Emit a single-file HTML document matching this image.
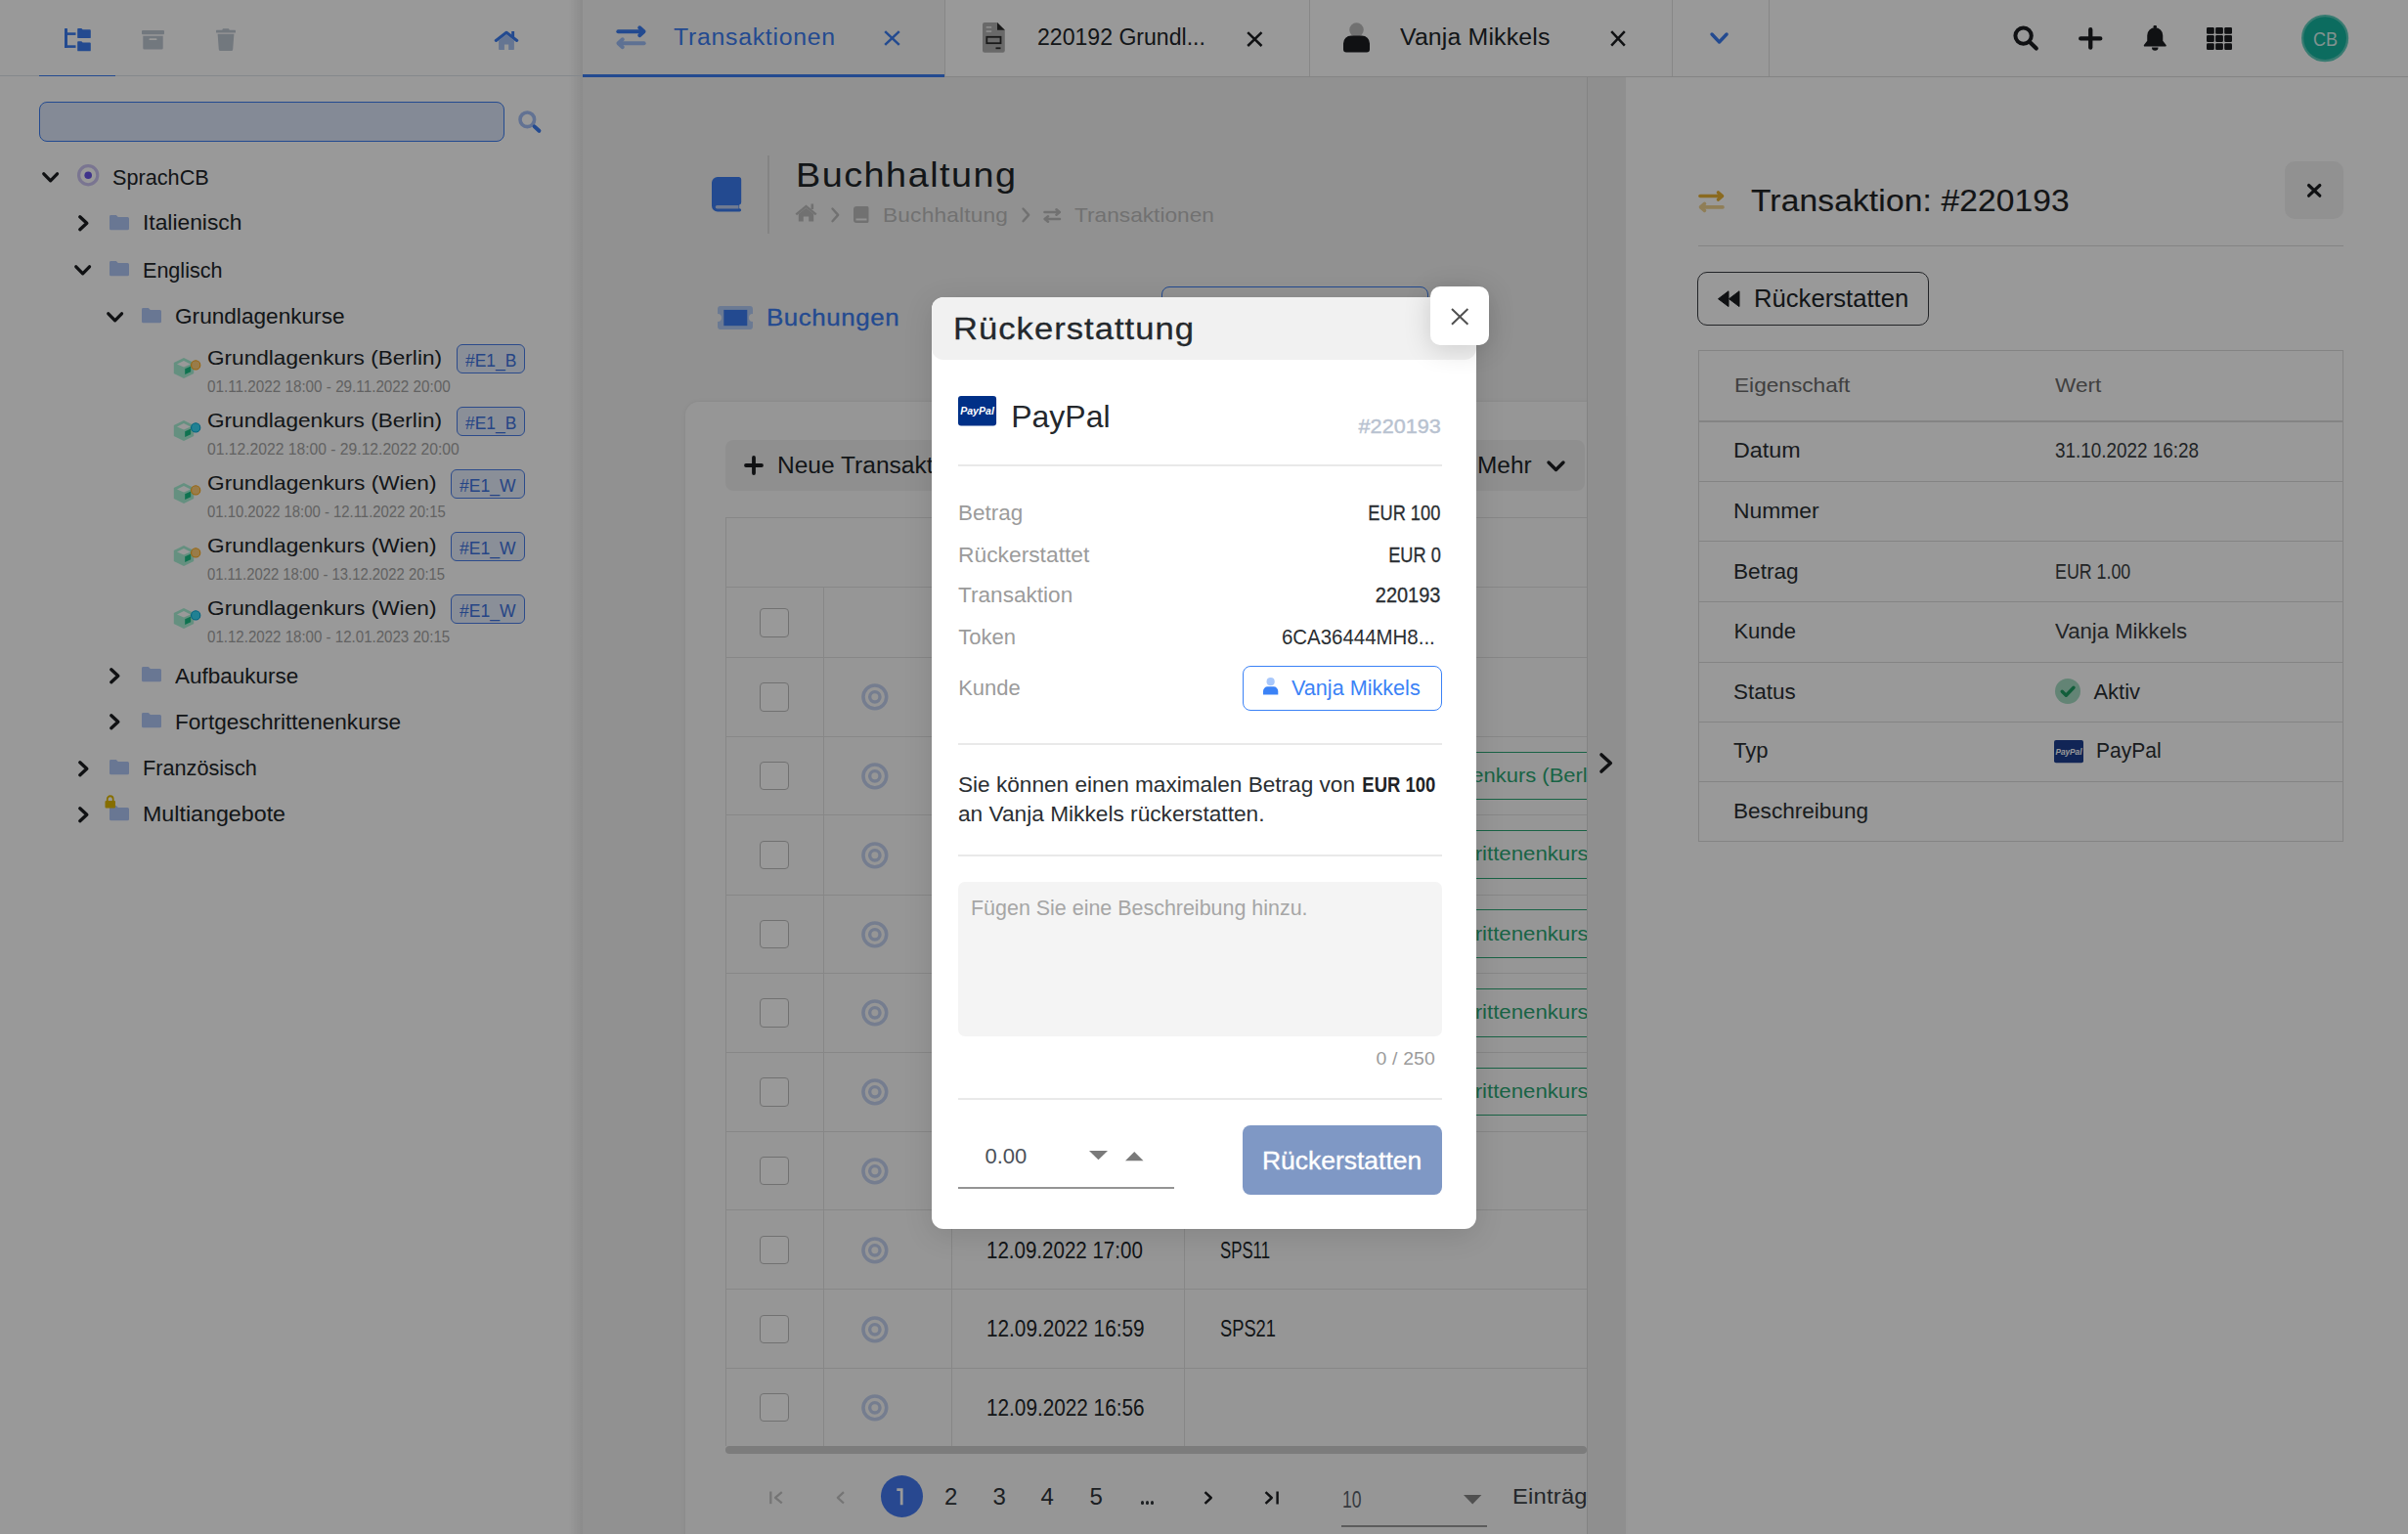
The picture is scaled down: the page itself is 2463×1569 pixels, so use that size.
<!DOCTYPE html>
<html><head><meta charset="utf-8"><title>Rückerstattung</title>
<style>
html,body{margin:0;padding:0;}
body{width:2463px;height:1569px;position:relative;overflow:hidden;background:#fff;font-family:"Liberation Sans",sans-serif;}
.a{position:absolute;box-sizing:border-box;}
.t{position:absolute;white-space:nowrap;line-height:1;font-family:"Liberation Sans",sans-serif;}
svg.a{overflow:visible;}
</style></head><body>
<div class="a" style="left:0.0px;top:0.0px;width:596.0px;height:1569.0px;background:#ffffff;"></div>
<div class="a" style="left:596.0px;top:79.0px;width:1027.0px;height:1490.0px;background:#f2f2f2;"></div>
<div class="a" style="left:1623.0px;top:79.0px;width:40.0px;height:1490.0px;background:#efefef;"></div>
<div class="a" style="left:1622.5px;top:79.0px;width:1.5px;height:1490.0px;background:#dadada;"></div>
<div class="a" style="left:1663.0px;top:79.0px;width:800.0px;height:1490.0px;background:#ffffff;"></div>
<div class="a" style="left:582.0px;top:0.0px;width:14.0px;height:1569.0px;background:linear-gradient(90deg,rgba(0,0,0,0) 0%,rgba(0,0,0,0.09) 100%);"></div>
<div class="a" style="left:596.0px;top:0.0px;width:1867.0px;height:78.0px;background:#ffffff;"></div>
<div class="a" style="left:596.0px;top:0.0px;width:370.0px;height:78.0px;background:#f7f7f7;"></div>
<div class="a" style="left:596.0px;top:78.0px;width:1867.0px;height:1.0px;background:#dcdcdc;"></div>
<div class="a" style="left:966.0px;top:0.0px;width:1.0px;height:78.0px;background:#e2e2e2;"></div>
<div class="a" style="left:1338.5px;top:0.0px;width:1.0px;height:78.0px;background:#e2e2e2;"></div>
<div class="a" style="left:1709.5px;top:0.0px;width:1.0px;height:78.0px;background:#e2e2e2;"></div>
<div class="a" style="left:1809.0px;top:0.0px;width:1.0px;height:78.0px;background:#e2e2e2;"></div>
<div class="a" style="left:596.0px;top:76.0px;width:370.0px;height:3.0px;background:#3b7cf0;"></div>
<div class="a" style="left:0.0px;top:77.0px;width:596.0px;height:1.0px;background:#dde3ea;"></div>
<div class="a" style="left:40.0px;top:76.8px;width:78.0px;height:1.5px;background:#3b7cf0;"></div>
<svg class="a" style="left:66.0px;top:29.0px;" width="26.5" height="23.5" viewBox="0 0 26.5 23.5"><g fill="#3b7cf0">
<rect x="0" y="0" width="3" height="20" rx="0.5"/>
<rect x="0" y="4.3" width="11.5" height="2.6"/>
<rect x="0" y="17.3" width="11.5" height="2.6"/>
<path d="M13.2 0.8a0.8 0.8 0 0 1 0.8-0.8h3.3l1.3 1.3h7.3a0.9 0.9 0 0 1 0.9 0.9v7a0.9 0.9 0 0 1-0.9 0.9h-11.8a0.9 0.9 0 0 1-0.9-0.9z"/>
<path d="M13.2 14a0.8 0.8 0 0 1 0.8-0.8h3.3l1.3 1.3h7.3a0.9 0.9 0 0 1 0.9 0.9v7a0.9 0.9 0 0 1-0.9 0.9h-11.8a0.9 0.9 0 0 1-0.9-0.9z"/>
</g></svg>
<svg class="a" style="left:145.0px;top:30.5px;" width="23.0" height="20.0" viewBox="0 0 23 20"><g fill="#bfc8d3"><rect x="0" y="0" width="23" height="4.2" rx="1"/>
<path d="M1.3 5.7h20.4v12.6a1.3 1.3 0 0 1-1.3 1.3h-17.8a1.3 1.3 0 0 1-1.3-1.3z"/>
<rect x="7.5" y="8.3" width="8" height="1.8" rx="0.9" fill="#ffffff"/></g></svg>
<svg class="a" style="left:221.0px;top:29.0px;" width="20.0" height="23.0" viewBox="0 0 20 23"><g fill="#bfc8d3"><rect x="0" y="1.8" width="20" height="2.6" rx="0.5"/>
<path d="M7 0.2h6l0.8 1.8h-7.6z"/>
<path d="M1.6 5.7h16.8l-1.2 15.8a1.6 1.6 0 0 1-1.6 1.5h-11.2a1.6 1.6 0 0 1-1.6-1.5z"/></g></svg>
<svg class="a" style="left:505.0px;top:30.0px;" width="26.0" height="22.0" viewBox="0 0 26 22"><path d="M5.1 11.4L13 5.6L20.9 11.4V20.2a0.8 0.8 0 0 1-0.8 0.8H15.2V15.5H10.9V21H5.9a0.8 0.8 0 0 1-0.8-0.8z" fill="#a9c3f3"/>
<rect x="18.2" y="2" width="2.9" height="6.8" fill="#3b7cf0"/>
<polyline points="2.3,11.4 13,3.3 23.7,11.4" fill="none" stroke="#3b7cf0" stroke-width="3.1" stroke-linecap="round" stroke-linejoin="round"/></svg>
<div class="a" style="left:40.0px;top:104.0px;width:476.0px;height:40.8px;background:#dde6fb;border:1.6px solid #3b7cf0;border-radius:8px;"></div>
<svg class="a" style="left:530.0px;top:113.0px;" width="23.5" height="23.5" viewBox="0 0 23.5 23.5"><circle cx="9.3" cy="9.3" r="7.3" fill="none" stroke="#a3bff5" stroke-width="3.6"/>
<path d="M16.6 16.4 L21.4 20.8" stroke="#3b7cf0" stroke-width="4" stroke-linecap="round"/></svg>
<svg class="a" style="left:43.4px;top:176.1px;" width="17.3" height="10.8" viewBox="0 0 17.3 10.8"><polyline points="1.8,1.8 8.65,8.8 15.5,1.8" fill="none" stroke="#1b1d20" stroke-width="3.3" stroke-linecap="round" stroke-linejoin="round"/></svg>
<svg class="a" style="left:79.3px;top:168.3px;" width="22.4" height="22.4" viewBox="0 0 22.4 22.4"><circle cx="11.2" cy="11.2" r="9.6" fill="none" stroke="#cbc3f2" stroke-width="3.2"/><circle cx="11.2" cy="11.2" r="3.8" fill="#6a55e8"/></svg>
<div class="t" style="left:115.4px;top:170.5px;font-size:22px;color:#212529;transform:scaleX(0.9848);transform-origin:0.00px 0;">SprachCB</div>
<svg class="a" style="left:79.6px;top:220.2px;" width="10.8" height="16.5" viewBox="0 0 10.8 16.5"><polyline points="1.8,1.8 8.8,8.25 1.8,14.7" fill="none" stroke="#1b1d20" stroke-width="3.4" stroke-linecap="round" stroke-linejoin="round"/></svg>
<svg class="a" style="left:112.0px;top:219.5px;" width="20.0" height="15.2" viewBox="0 0 20 15.2"><path d="M0 1.5a1.5 1.5 0 0 1 1.5-1.5h5.3l2 2h9.7a1.5 1.5 0 0 1 1.5 1.5v10.2a1.5 1.5 0 0 1-1.5 1.5h-17a1.5 1.5 0 0 1-1.5-1.5z" fill="#b0c6f5"/></svg>
<div class="t" style="left:146.0px;top:217.4px;font-size:22px;color:#212529;transform:scaleX(1.0359);transform-origin:0.00px 0;">Italienisch</div>
<svg class="a" style="left:76.3px;top:271.4px;" width="17.3" height="10.8" viewBox="0 0 17.3 10.8"><polyline points="1.8,1.8 8.65,8.8 15.5,1.8" fill="none" stroke="#1b1d20" stroke-width="3.3" stroke-linecap="round" stroke-linejoin="round"/></svg>
<svg class="a" style="left:112.0px;top:267.0px;" width="20.0" height="15.2" viewBox="0 0 20 15.2"><path d="M0 1.5a1.5 1.5 0 0 1 1.5-1.5h5.3l2 2h9.7a1.5 1.5 0 0 1 1.5 1.5v10.2a1.5 1.5 0 0 1-1.5 1.5h-17a1.5 1.5 0 0 1-1.5-1.5z" fill="#b0c6f5"/></svg>
<div class="t" style="left:146.0px;top:265.6px;font-size:22px;color:#212529;transform:scaleX(0.9800);transform-origin:0.00px 0;">Englisch</div>
<svg class="a" style="left:109.3px;top:318.8px;" width="17.3" height="10.8" viewBox="0 0 17.3 10.8"><polyline points="1.8,1.8 8.65,8.8 15.5,1.8" fill="none" stroke="#1b1d20" stroke-width="3.3" stroke-linecap="round" stroke-linejoin="round"/></svg>
<svg class="a" style="left:145.0px;top:314.5px;" width="20.0" height="15.2" viewBox="0 0 20 15.2"><path d="M0 1.5a1.5 1.5 0 0 1 1.5-1.5h5.3l2 2h9.7a1.5 1.5 0 0 1 1.5 1.5v10.2a1.5 1.5 0 0 1-1.5 1.5h-17a1.5 1.5 0 0 1-1.5-1.5z" fill="#b0c6f5"/></svg>
<div class="t" style="left:179.0px;top:312.6px;font-size:22px;color:#212529;transform:scaleX(1.0282);transform-origin:0.00px 0;">Grundlagenkurse</div>
<svg class="a" style="left:177.8px;top:366.4px;" width="27.0" height="22.0" viewBox="0 0 27 22"><polygon points="10,0 20.2,4.9 20.2,16.1 10,21 -0.2,16.1 -0.2,4.9" fill="#a9f0d6"/>
<polygon points="10,3.1 16.9,6.4 10,9.4 3,6.4" fill="#ffffff"/>
<polygon points="11.2,11.3 17.2,8.5 17.2,14.3 11.2,17.1" fill="#19bf85"/>
<circle cx="22.2" cy="7.4" r="4.6" fill="#ffcf7a" stroke="#ffa915" stroke-width="1.1"/></svg>
<div class="t" style="left:212.0px;top:355.2px;font-size:21px;color:#212529;transform:scaleX(1.0766);transform-origin:0.00px 0;">Grundlagenkurs (Berlin)</div>
<div class="t" style="left:212.0px;top:388.0px;font-size:16px;color:#a3a3a3;transform:scaleX(0.9530);transform-origin:0.00px 0;">01.11.2022 18:00 - 29.11.2022 20:00</div>
<div class="a" style="left:467.0px;top:352.0px;width:69.8px;height:29.5px;background:#e6eefd;border:1.6px solid #4a7ee8;border-radius:6px;"></div>
<div class="t" style="left:475.6px;top:359.9px;font-size:18px;color:#3f73e0;transform:scaleX(0.9688);transform-origin:0.00px 0;">#E1_B</div>
<svg class="a" style="left:177.8px;top:430.4px;" width="27.0" height="22.0" viewBox="0 0 27 22"><polygon points="10,0 20.2,4.9 20.2,16.1 10,21 -0.2,16.1 -0.2,4.9" fill="#a9f0d6"/>
<polygon points="10,3.1 16.9,6.4 10,9.4 3,6.4" fill="#ffffff"/>
<polygon points="11.2,11.3 17.2,8.5 17.2,14.3 11.2,17.1" fill="#19bf85"/>
<circle cx="22.2" cy="7.4" r="4.6" fill="#38d8f6" stroke="#00a6d4" stroke-width="1.1"/></svg>
<div class="t" style="left:212.0px;top:419.2px;font-size:21px;color:#212529;transform:scaleX(1.0766);transform-origin:0.00px 0;">Grundlagenkurs (Berlin)</div>
<div class="t" style="left:212.0px;top:452.0px;font-size:16px;color:#a3a3a3;transform:scaleX(0.9789);transform-origin:0.00px 0;">01.12.2022 18:00 - 29.12.2022 20:00</div>
<div class="a" style="left:467.0px;top:416.0px;width:69.8px;height:29.5px;background:#e6eefd;border:1.6px solid #4a7ee8;border-radius:6px;"></div>
<div class="t" style="left:475.6px;top:423.9px;font-size:18px;color:#3f73e0;transform:scaleX(0.9688);transform-origin:0.00px 0;">#E1_B</div>
<svg class="a" style="left:177.8px;top:494.4px;" width="27.0" height="22.0" viewBox="0 0 27 22"><polygon points="10,0 20.2,4.9 20.2,16.1 10,21 -0.2,16.1 -0.2,4.9" fill="#a9f0d6"/>
<polygon points="10,3.1 16.9,6.4 10,9.4 3,6.4" fill="#ffffff"/>
<polygon points="11.2,11.3 17.2,8.5 17.2,14.3 11.2,17.1" fill="#19bf85"/>
<circle cx="22.2" cy="7.4" r="4.6" fill="#ffcf7a" stroke="#ffa915" stroke-width="1.1"/></svg>
<div class="t" style="left:212.0px;top:483.2px;font-size:21px;color:#212529;transform:scaleX(1.0799);transform-origin:0.00px 0;">Grundlagenkurs (Wien)</div>
<div class="t" style="left:212.0px;top:516.0px;font-size:16px;color:#a3a3a3;transform:scaleX(0.9296);transform-origin:0.00px 0;">01.10.2022 18:00 - 12.11.2022 20:15</div>
<div class="a" style="left:461.0px;top:480.0px;width:75.8px;height:29.5px;background:#e6eefd;border:1.6px solid #4a7ee8;border-radius:6px;"></div>
<div class="t" style="left:470.0px;top:487.9px;font-size:18px;color:#3f73e0;transform:scaleX(0.9739);transform-origin:0.00px 0;">#E1_W</div>
<svg class="a" style="left:177.8px;top:558.4px;" width="27.0" height="22.0" viewBox="0 0 27 22"><polygon points="10,0 20.2,4.9 20.2,16.1 10,21 -0.2,16.1 -0.2,4.9" fill="#a9f0d6"/>
<polygon points="10,3.1 16.9,6.4 10,9.4 3,6.4" fill="#ffffff"/>
<polygon points="11.2,11.3 17.2,8.5 17.2,14.3 11.2,17.1" fill="#19bf85"/>
<circle cx="22.2" cy="7.4" r="4.6" fill="#ffcf7a" stroke="#ffa915" stroke-width="1.1"/></svg>
<div class="t" style="left:212.0px;top:547.2px;font-size:21px;color:#212529;transform:scaleX(1.0799);transform-origin:0.00px 0;">Grundlagenkurs (Wien)</div>
<div class="t" style="left:212.0px;top:580.0px;font-size:16px;color:#a3a3a3;transform:scaleX(0.9269);transform-origin:0.00px 0;">01.11.2022 18:00 - 13.12.2022 20:15</div>
<div class="a" style="left:461.0px;top:544.0px;width:75.8px;height:29.5px;background:#e6eefd;border:1.6px solid #4a7ee8;border-radius:6px;"></div>
<div class="t" style="left:470.0px;top:551.9px;font-size:18px;color:#3f73e0;transform:scaleX(0.9739);transform-origin:0.00px 0;">#E1_W</div>
<svg class="a" style="left:177.8px;top:622.4px;" width="27.0" height="22.0" viewBox="0 0 27 22"><polygon points="10,0 20.2,4.9 20.2,16.1 10,21 -0.2,16.1 -0.2,4.9" fill="#a9f0d6"/>
<polygon points="10,3.1 16.9,6.4 10,9.4 3,6.4" fill="#ffffff"/>
<polygon points="11.2,11.3 17.2,8.5 17.2,14.3 11.2,17.1" fill="#19bf85"/>
<circle cx="22.2" cy="7.4" r="4.6" fill="#38d8f6" stroke="#00a6d4" stroke-width="1.1"/></svg>
<div class="t" style="left:212.0px;top:611.2px;font-size:21px;color:#212529;transform:scaleX(1.0799);transform-origin:0.00px 0;">Grundlagenkurs (Wien)</div>
<div class="t" style="left:212.0px;top:644.0px;font-size:16px;color:#a3a3a3;transform:scaleX(0.9424);transform-origin:0.00px 0;">01.12.2022 18:00 - 12.01.2023 20:15</div>
<div class="a" style="left:461.0px;top:608.0px;width:75.8px;height:29.5px;background:#e6eefd;border:1.6px solid #4a7ee8;border-radius:6px;"></div>
<div class="t" style="left:470.0px;top:615.9px;font-size:18px;color:#3f73e0;transform:scaleX(0.9739);transform-origin:0.00px 0;">#E1_W</div>
<svg class="a" style="left:112.0px;top:683.0px;" width="10.8" height="16.5" viewBox="0 0 10.8 16.5"><polyline points="1.8,1.8 8.8,8.25 1.8,14.7" fill="none" stroke="#1b1d20" stroke-width="3.4" stroke-linecap="round" stroke-linejoin="round"/></svg>
<svg class="a" style="left:145.0px;top:681.8px;" width="20.0" height="15.2" viewBox="0 0 20 15.2"><path d="M0 1.5a1.5 1.5 0 0 1 1.5-1.5h5.3l2 2h9.7a1.5 1.5 0 0 1 1.5 1.5v10.2a1.5 1.5 0 0 1-1.5 1.5h-17a1.5 1.5 0 0 1-1.5-1.5z" fill="#b0c6f5"/></svg>
<div class="t" style="left:179.3px;top:680.5px;font-size:22px;color:#212529;transform:scaleX(1.0216);transform-origin:0.00px 0;">Aufbaukurse</div>
<svg class="a" style="left:112.0px;top:730.0px;" width="10.8" height="16.5" viewBox="0 0 10.8 16.5"><polyline points="1.8,1.8 8.8,8.25 1.8,14.7" fill="none" stroke="#1b1d20" stroke-width="3.4" stroke-linecap="round" stroke-linejoin="round"/></svg>
<svg class="a" style="left:145.0px;top:728.8px;" width="20.0" height="15.2" viewBox="0 0 20 15.2"><path d="M0 1.5a1.5 1.5 0 0 1 1.5-1.5h5.3l2 2h9.7a1.5 1.5 0 0 1 1.5 1.5v10.2a1.5 1.5 0 0 1-1.5 1.5h-17a1.5 1.5 0 0 1-1.5-1.5z" fill="#b0c6f5"/></svg>
<div class="t" style="left:179.3px;top:727.5px;font-size:22px;color:#212529;transform:scaleX(1.0273);transform-origin:0.00px 0;">Fortgeschrittenenkurse</div>
<svg class="a" style="left:79.6px;top:777.5px;" width="10.8" height="16.5" viewBox="0 0 10.8 16.5"><polyline points="1.8,1.8 8.8,8.25 1.8,14.7" fill="none" stroke="#1b1d20" stroke-width="3.4" stroke-linecap="round" stroke-linejoin="round"/></svg>
<svg class="a" style="left:112.0px;top:776.5px;" width="20.0" height="15.2" viewBox="0 0 20 15.2"><path d="M0 1.5a1.5 1.5 0 0 1 1.5-1.5h5.3l2 2h9.7a1.5 1.5 0 0 1 1.5 1.5v10.2a1.5 1.5 0 0 1-1.5 1.5h-17a1.5 1.5 0 0 1-1.5-1.5z" fill="#b0c6f5"/></svg>
<div class="t" style="left:146.0px;top:775.0px;font-size:22px;color:#212529;transform:scaleX(0.9850);transform-origin:0.00px 0;">Französisch</div>
<svg class="a" style="left:79.6px;top:824.5px;" width="10.8" height="16.5" viewBox="0 0 10.8 16.5"><polyline points="1.8,1.8 8.8,8.25 1.8,14.7" fill="none" stroke="#1b1d20" stroke-width="3.4" stroke-linecap="round" stroke-linejoin="round"/></svg>
<svg class="a" style="left:112.0px;top:823.5px;" width="20.0" height="15.2" viewBox="0 0 20 15.2"><path d="M0 1.5a1.5 1.5 0 0 1 1.5-1.5h5.3l2 2h9.7a1.5 1.5 0 0 1 1.5 1.5v10.2a1.5 1.5 0 0 1-1.5 1.5h-17a1.5 1.5 0 0 1-1.5-1.5z" fill="#b0c6f5"/></svg>
<div class="t" style="left:146.0px;top:822.0px;font-size:22px;color:#212529;transform:scaleX(1.0567);transform-origin:0.00px 0;">Multiangebote</div>
<svg class="a" style="left:107.0px;top:813.0px;" width="11.5" height="14.0" viewBox="0 0 11.5 14"><path d="M2.8 6V4.2a2.95 2.95 0 0 1 5.9 0V6" fill="none" stroke="#e0b800" stroke-width="1.8"/><rect x="0.5" y="6" width="10.5" height="7.5" rx="1" fill="#e0b800"/></svg>
<svg class="a" style="left:630.0px;top:25.7px;" width="31.0" height="24.5" viewBox="0 0 31 24.5"><g fill="none" stroke-linecap="round" stroke-linejoin="round" stroke-width="3.9">
<g stroke="#3b7cf0"><path d="M2.3 6.3H27.5"/><polyline points="24.2,2.3 28.6,6.3 24.2,10.3"/></g>
<g stroke="#9dbdf5"><path d="M28.7 18.2H3.5"/><polyline points="6.8,14.2 2.4,18.2 6.8,22.2"/></g></g></svg>
<div class="t" style="left:689.3px;top:26.7px;font-size:23px;color:#3b7cf0;letter-spacing:0.67px;transform:scaleX(1.0800);transform-origin:0.00px 0;">Transaktionen</div>
<svg class="a" style="left:904.0px;top:31.0px;" width="17.0" height="16.0" viewBox="0 0 17 16"><path d="M1.2 1.2L15.8 14.8M15.8 1.2L1.2 14.8" stroke="#3b7cf0" stroke-width="2.5" stroke-linecap="butt"/></svg>
<svg class="a" style="left:1005.0px;top:23.0px;" width="22.8" height="30.7" viewBox="0 0 22.8 30.7"><path d="M0 2a2 2 0 0 1 2-2h13l7.8 7.8v20.9a2 2 0 0 1-2 2h-18.8a2 2 0 0 1-2-2z" fill="#b0b0b0"/>
<path d="M15 0v7.8h7.8z" fill="#2b2b2b"/>
<rect x="3.7" y="4" width="5.5" height="1.8" fill="#e6e6e6"/><rect x="3.7" y="8.2" width="5.5" height="1.8" fill="#e6e6e6"/>
<rect x="4.3" y="14.8" width="14.2" height="6.4" fill="none" stroke="#2b2b2b" stroke-width="1.8"/>
<rect x="13.5" y="25.4" width="5" height="1.8" fill="#2b2b2b"/></svg>
<div class="t" style="left:1060.5px;top:26.7px;font-size:23px;color:#212529;transform:scaleX(1.0032);transform-origin:0.00px 0;">220192 Grundl...</div>
<svg class="a" style="left:1275.0px;top:31.5px;" width="16.7" height="16.2" viewBox="0 0 16.7 16.2"><path d="M1.2 1.2L15.5 15.0M15.5 1.2L1.2 15.0" stroke="#1b1d20" stroke-width="2.5" stroke-linecap="butt"/></svg>
<svg class="a" style="left:1374.0px;top:22.8px;" width="27.0" height="30.8" viewBox="0 0 27 30.8"><circle cx="13.5" cy="7.6" r="7.3" fill="#bdbdbd"/>
<path d="M0 27.5v-6a8 8 0 0 1 8-8h11a8 8 0 0 1 8 8v6a3 3 0 0 1-3 3h-21a3 3 0 0 1-3-3z" fill="#1b1d20"/></svg>
<div class="t" style="left:1431.7px;top:27.0px;font-size:23px;color:#212529;letter-spacing:0.15px;transform:scaleX(1.0800);transform-origin:0.00px 0;">Vanja Mikkels</div>
<svg class="a" style="left:1647.0px;top:31.0px;" width="16.0" height="16.8" viewBox="0 0 16 16.8"><path d="M1.2 1.2L14.8 15.600000000000001M14.8 1.2L1.2 15.600000000000001" stroke="#1b1d20" stroke-width="2.5" stroke-linecap="butt"/></svg>
<svg class="a" style="left:1749.4px;top:33.0px;" width="19.1" height="12.3" viewBox="0 0 19.1 12.3"><polyline points="2,2 9.55,10 17.1,2" fill="none" stroke="#3b7cf0" stroke-width="3.4" stroke-linecap="round" stroke-linejoin="round"/></svg>
<svg class="a" style="left:2058.8px;top:26.0px;" width="26.2" height="25.8" viewBox="0 0 26.2 25.8"><circle cx="10.6" cy="10.6" r="8.2" fill="none" stroke="#1b1d20" stroke-width="4"/><path d="M16.8 16.8L23.8 23.6" stroke="#1b1d20" stroke-width="4.2" stroke-linecap="round"/></svg>
<svg class="a" style="left:2125.7px;top:27.5px;" width="24.5" height="22.9" viewBox="0 0 24.5 22.9"><path d="M12.25 2.2V20.7M2.2 11.45H22.3" stroke="#1b1d20" stroke-width="4.3" stroke-linecap="round"/></svg>
<svg class="a" style="left:2191.8px;top:26.0px;" width="24.5" height="25.8" viewBox="0 0 24.5 25.8"><path d="M12.25 2.2a8 8 0 0 1 8 8v5.5l3.3 4.3a1 1 0 0 1-.8 1.6h-21a1 1 0 0 1-.8-1.6l3.3-4.3v-5.5a8 8 0 0 1 8-8z" fill="#1b1d20"/>
<rect x="10.5" y="0" width="3.5" height="3" rx="1.2" fill="#1b1d20"/><path d="M9 22.5h6.5a3.25 3.25 0 0 1-6.5 0z" fill="#1b1d20"/></svg>
<svg class="a" style="left:2257.0px;top:27.5px;" width="26.2" height="22.9" viewBox="0 0 26.2 22.9"><rect x="0.0" y="0.0" width="7.8" height="6.8" rx="1.2" fill="#1b1d20"/><rect x="9.1" y="0.0" width="7.8" height="6.8" rx="1.2" fill="#1b1d20"/><rect x="18.2" y="0.0" width="7.8" height="6.8" rx="1.2" fill="#1b1d20"/><rect x="0.0" y="8.1" width="7.8" height="6.8" rx="1.2" fill="#1b1d20"/><rect x="9.1" y="8.1" width="7.8" height="6.8" rx="1.2" fill="#1b1d20"/><rect x="18.2" y="8.1" width="7.8" height="6.8" rx="1.2" fill="#1b1d20"/><rect x="0.0" y="16.2" width="7.8" height="6.8" rx="1.2" fill="#1b1d20"/><rect x="9.1" y="16.2" width="7.8" height="6.8" rx="1.2" fill="#1b1d20"/><rect x="18.2" y="16.2" width="7.8" height="6.8" rx="1.2" fill="#1b1d20"/></svg>
<svg class="a" style="left:2354.0px;top:15.0px;" width="48.2" height="48.2" viewBox="0 0 48.2 48.2"><circle cx="24.1" cy="24.1" r="23" fill="#15b49e" stroke="#5ccdbd" stroke-width="2.2"/></svg>
<div class="t" style="left:2365.5px;top:29.0px;font-size:21px;color:#d6f3ee;transform:scaleX(0.8565);transform-origin:0.00px 0;">CB</div>
<svg class="a" style="left:727.9px;top:180.7px;" width="30.2" height="36.5" viewBox="0 0 30.2 36.5"><path d="M6 0h21.5a2.7 2.7 0 0 1 2.7 2.7v23.3a2.7 2.7 0 0 1-2 2.6v3.6h0.3a1.6 1.6 0 0 1 0 3.3h-22.5a6 6 0 0 1-6-6v-23.5a6 6 0 0 1 6-6z" fill="#3b7cf0"/>
<path d="M5.5 29h22v3.6h-22a1.8 1.8 0 0 1 0-3.6z" fill="#b9ccf2"/></svg>
<div class="a" style="left:785.0px;top:158.6px;width:1.5px;height:80.9px;background:#dcdcdc;"></div>
<div class="t" style="left:814.4px;top:160.7px;font-size:35px;color:#212529;letter-spacing:1.38px;transform:scaleX(1.0800);transform-origin:0.00px 0;">Buchhaltung</div>
<svg class="a" style="left:813.0px;top:208.0px;" width="23.0" height="19.5" viewBox="0 0 23 19.5"><g fill="#bdbdbd"><path d="M11.5 1.5 L22.5 10.5 L21 12.3 L11.5 4.5 L2 12.3 L0.5 10.5z"/>
<path d="M3.8 10.8 L11.5 4.8 L19.2 10.8 V18.5 H14.2 V13.5 H8.8 V18.5 H3.8z"/><rect x="16.5" y="0.5" width="2.6" height="5.5"/></g></svg>
<svg class="a" style="left:850.0px;top:212.0px;" width="9.0" height="15.7" viewBox="0 0 9 15.7"><polyline points="1.5,1.5 7.2,7.85 1.5,14.2" fill="none" stroke="#bdbdbd" stroke-width="2.4" stroke-linecap="round" stroke-linejoin="round"/></svg>
<svg class="a" style="left:873.3px;top:211.4px;" width="15.5" height="17.4" viewBox="0 0 15.5 17.4"><path d="M3 0h11a1.5 1.5 0 0 1 1.5 1.5v14a1.5 1.5 0 0 1-1.5 1.5h-11a3 3 0 0 1-3-3v-11a3 3 0 0 1 3-3z" fill="#bdbdbd"/><rect x="2.5" y="12.5" width="11" height="2" fill="#f3f3f3"/></svg>
<div class="t" style="left:902.8px;top:208.5px;font-size:21px;color:#bdbdbd;letter-spacing:0.17px;transform:scaleX(1.0800);transform-origin:0.00px 0;">Buchhaltung</div>
<svg class="a" style="left:1044.9px;top:212.0px;" width="9.0" height="15.7" viewBox="0 0 9 15.7"><polyline points="1.5,1.5 7.2,7.85 1.5,14.2" fill="none" stroke="#bdbdbd" stroke-width="2.4" stroke-linecap="round" stroke-linejoin="round"/></svg>
<svg class="a" style="left:1067.4px;top:212.5px;" width="18.6" height="15.0" viewBox="0 0 18.6 15"><g fill="none" stroke="#bdbdbd" stroke-width="2.6" stroke-linecap="round" stroke-linejoin="round"><path d="M1.5 4H16.5"/><polyline points="13.5,1.3 16.8,4 13.5,6.7"/>
<path d="M17 11H2"/><polyline points="5,8.3 1.7,11 5,13.7"/></g></svg>
<div class="t" style="left:1099.3px;top:208.5px;font-size:21px;color:#bdbdbd;transform:scaleX(1.0800);transform-origin:0.00px 0;">Transaktionen</div>
<svg class="a" style="left:733.7px;top:312.8px;" width="36.1" height="24.2" viewBox="0 0 36.1 24.2"><path d="M3 0h30a3 3 0 0 1 3 3v5a4 4 0 0 0 0 8v5a3 3 0 0 1-3 3h-30a3 3 0 0 1-3-3v-5a4 4 0 0 0 0-8v-5a3 3 0 0 1 3-3z" fill="#b3cbf5"/>
<rect x="6.3" y="3.9" width="24" height="16.3" fill="#3b7cf0"/></svg>
<div class="t" style="left:784.2px;top:313.0px;font-size:24px;color:#3b7cf0;letter-spacing:0.51px;transform:scaleX(1.0800);transform-origin:0.00px 0;-webkit-text-stroke:0.3px #3b7cf0;">Buchungen</div>
<div class="a" style="left:1188px;top:293px;width:273px;height:60px;border:1.6px solid #3b7cf0;border-radius:8px;background:#f3f3f3;"></div>
<div class="a" style="left:701px;top:411px;width:960px;height:1200px;background:#fbfbfb;border-radius:14px;box-shadow:0 0 4px rgba(0,0,0,0.08);"></div>
<div class="a" style="left:741.6px;top:450.2px;width:879.0px;height:52.3px;background:#efefef;border-radius:8px;"></div>
<svg class="a" style="left:761.0px;top:466.4px;" width="20.0" height="20.0" viewBox="0 0 20 20"><path d="M10 2V18M2 10H18" stroke="#1b1d20" stroke-width="3.8" stroke-linecap="round"/></svg>
<div class="t" style="left:795.2px;top:465.0px;font-size:23px;color:#212529;transform:scaleX(1.0670);transform-origin:0.00px 0;">Neue Transaktion</div>
<div class="t" style="left:1511.4px;top:464.9px;font-size:23px;color:#212529;transform:scaleX(1.0603);transform-origin:0.00px 0;">Mehr</div>
<svg class="a" style="left:1581.8px;top:470.6px;" width="19.0" height="11.5" viewBox="0 0 19 11.5"><polyline points="2,2 9.5,9.5 17,2" fill="none" stroke="#1b1d20" stroke-width="3.4" stroke-linecap="round" stroke-linejoin="round"/></svg>
<div class="a" style="left:741.6px;top:529.3px;width:1.0px;height:949.7px;background:#e2e2e2;"></div>
<div class="a" style="left:741.6px;top:529.3px;width:881.4px;height:1.0px;background:#e2e2e2;"></div>
<div class="a" style="left:741.6px;top:600.2px;width:881.4px;height:1.0px;background:#e2e2e2;"></div>
<div class="a" style="left:741.6px;top:672.3px;width:881.4px;height:1.0px;background:#e2e2e2;"></div>
<div class="a" style="left:741.6px;top:752.9px;width:881.4px;height:1.0px;background:#e2e2e2;"></div>
<div class="a" style="left:741.6px;top:833.3px;width:881.4px;height:1.0px;background:#e2e2e2;"></div>
<div class="a" style="left:741.6px;top:914.5px;width:881.4px;height:1.0px;background:#e2e2e2;"></div>
<div class="a" style="left:741.6px;top:995.2px;width:881.4px;height:1.0px;background:#e2e2e2;"></div>
<div class="a" style="left:741.6px;top:1076.0px;width:881.4px;height:1.0px;background:#e2e2e2;"></div>
<div class="a" style="left:741.6px;top:1156.7px;width:881.4px;height:1.0px;background:#e2e2e2;"></div>
<div class="a" style="left:741.6px;top:1237.4px;width:881.4px;height:1.0px;background:#e2e2e2;"></div>
<div class="a" style="left:741.6px;top:1318.4px;width:881.4px;height:1.0px;background:#e2e2e2;"></div>
<div class="a" style="left:741.6px;top:1399.4px;width:881.4px;height:1.0px;background:#e2e2e2;"></div>
<div class="a" style="left:841.5px;top:600.2px;width:1.0px;height:878.8px;background:#e2e2e2;"></div>
<div class="a" style="left:972.6px;top:600.2px;width:1.0px;height:878.8px;background:#e2e2e2;"></div>
<div class="a" style="left:1211.4px;top:600.2px;width:1.0px;height:878.8px;background:#e2e2e2;"></div>
<div class="a" style="left:777.0px;top:622.0px;width:29.7px;height:29.6px;border:1.6px solid #bdbdbd;border-radius:4px;background:#fff;"></div>
<div class="a" style="left:777.0px;top:698.3px;width:29.7px;height:29.6px;border:1.6px solid #bdbdbd;border-radius:4px;background:#fff;"></div>
<svg class="a" style="left:880.6px;top:699.2px;" width="27.7" height="27.7" viewBox="0 0 27.7 27.7"><circle cx="13.85" cy="13.85" r="11.9" fill="none" stroke="#c3d1ee" stroke-width="3.6"/><circle cx="13.85" cy="13.85" r="5.2" fill="none" stroke="#c3d1ee" stroke-width="3.4"/></svg>
<div class="a" style="left:777.0px;top:778.8px;width:29.7px;height:29.6px;border:1.6px solid #bdbdbd;border-radius:4px;background:#fff;"></div>
<svg class="a" style="left:880.6px;top:779.7px;" width="27.7" height="27.7" viewBox="0 0 27.7 27.7"><circle cx="13.85" cy="13.85" r="11.9" fill="none" stroke="#c3d1ee" stroke-width="3.6"/><circle cx="13.85" cy="13.85" r="5.2" fill="none" stroke="#c3d1ee" stroke-width="3.4"/></svg>
<div class="a" style="left:777.0px;top:859.6px;width:29.7px;height:29.6px;border:1.6px solid #bdbdbd;border-radius:4px;background:#fff;"></div>
<svg class="a" style="left:880.6px;top:860.5px;" width="27.7" height="27.7" viewBox="0 0 27.7 27.7"><circle cx="13.85" cy="13.85" r="11.9" fill="none" stroke="#c3d1ee" stroke-width="3.6"/><circle cx="13.85" cy="13.85" r="5.2" fill="none" stroke="#c3d1ee" stroke-width="3.4"/></svg>
<div class="a" style="left:777.0px;top:940.6px;width:29.7px;height:29.6px;border:1.6px solid #bdbdbd;border-radius:4px;background:#fff;"></div>
<svg class="a" style="left:880.6px;top:941.5px;" width="27.7" height="27.7" viewBox="0 0 27.7 27.7"><circle cx="13.85" cy="13.85" r="11.9" fill="none" stroke="#c3d1ee" stroke-width="3.6"/><circle cx="13.85" cy="13.85" r="5.2" fill="none" stroke="#c3d1ee" stroke-width="3.4"/></svg>
<div class="a" style="left:777.0px;top:1021.3px;width:29.7px;height:29.6px;border:1.6px solid #bdbdbd;border-radius:4px;background:#fff;"></div>
<svg class="a" style="left:880.6px;top:1022.2px;" width="27.7" height="27.7" viewBox="0 0 27.7 27.7"><circle cx="13.85" cy="13.85" r="11.9" fill="none" stroke="#c3d1ee" stroke-width="3.6"/><circle cx="13.85" cy="13.85" r="5.2" fill="none" stroke="#c3d1ee" stroke-width="3.4"/></svg>
<div class="a" style="left:777.0px;top:1102.0px;width:29.7px;height:29.6px;border:1.6px solid #bdbdbd;border-radius:4px;background:#fff;"></div>
<svg class="a" style="left:880.6px;top:1102.9px;" width="27.7" height="27.7" viewBox="0 0 27.7 27.7"><circle cx="13.85" cy="13.85" r="11.9" fill="none" stroke="#c3d1ee" stroke-width="3.6"/><circle cx="13.85" cy="13.85" r="5.2" fill="none" stroke="#c3d1ee" stroke-width="3.4"/></svg>
<div class="a" style="left:777.0px;top:1182.8px;width:29.7px;height:29.6px;border:1.6px solid #bdbdbd;border-radius:4px;background:#fff;"></div>
<svg class="a" style="left:880.6px;top:1183.7px;" width="27.7" height="27.7" viewBox="0 0 27.7 27.7"><circle cx="13.85" cy="13.85" r="11.9" fill="none" stroke="#c3d1ee" stroke-width="3.6"/><circle cx="13.85" cy="13.85" r="5.2" fill="none" stroke="#c3d1ee" stroke-width="3.4"/></svg>
<div class="a" style="left:777.0px;top:1263.6px;width:29.7px;height:29.6px;border:1.6px solid #bdbdbd;border-radius:4px;background:#fff;"></div>
<svg class="a" style="left:880.6px;top:1264.5px;" width="27.7" height="27.7" viewBox="0 0 27.7 27.7"><circle cx="13.85" cy="13.85" r="11.9" fill="none" stroke="#c3d1ee" stroke-width="3.6"/><circle cx="13.85" cy="13.85" r="5.2" fill="none" stroke="#c3d1ee" stroke-width="3.4"/></svg>
<div class="a" style="left:777.0px;top:1344.6px;width:29.7px;height:29.6px;border:1.6px solid #bdbdbd;border-radius:4px;background:#fff;"></div>
<svg class="a" style="left:880.6px;top:1345.5px;" width="27.7" height="27.7" viewBox="0 0 27.7 27.7"><circle cx="13.85" cy="13.85" r="11.9" fill="none" stroke="#c3d1ee" stroke-width="3.6"/><circle cx="13.85" cy="13.85" r="5.2" fill="none" stroke="#c3d1ee" stroke-width="3.4"/></svg>
<div class="a" style="left:777.0px;top:1424.9px;width:29.7px;height:29.6px;border:1.6px solid #bdbdbd;border-radius:4px;background:#fff;"></div>
<svg class="a" style="left:880.6px;top:1425.8px;" width="27.7" height="27.7" viewBox="0 0 27.7 27.7"><circle cx="13.85" cy="13.85" r="11.9" fill="none" stroke="#c3d1ee" stroke-width="3.6"/><circle cx="13.85" cy="13.85" r="5.2" fill="none" stroke="#c3d1ee" stroke-width="3.4"/></svg>
<div class="t" style="left:1008.6px;top:1267.5px;font-size:23px;color:#212529;transform:scaleX(0.8925);transform-origin:0.00px 0;">12.09.2022 17:00</div>
<div class="t" style="left:1248.0px;top:1267.5px;font-size:23px;color:#212529;transform:scaleX(0.7294);transform-origin:0.00px 0;">SPS11</div>
<div class="t" style="left:1008.6px;top:1348.3px;font-size:23px;color:#212529;transform:scaleX(0.9020);transform-origin:0.00px 0;">12.09.2022 16:59</div>
<div class="t" style="left:1248.0px;top:1348.3px;font-size:23px;color:#212529;transform:scaleX(0.7956);transform-origin:0.00px 0;">SPS21</div>
<div class="t" style="left:1008.6px;top:1429.1px;font-size:23px;color:#212529;transform:scaleX(0.9020);transform-origin:0.00px 0;">12.09.2022 16:56</div>
<div class="a" style="left:0;top:0;width:1623px;height:1569px;overflow:hidden;">
<div class="a" style="left:1300.0px;top:768.7px;width:400.0px;height:49.5px;border:1.6px solid #2ba673;border-radius:6px;"></div>
<div class="t" style="left:1414.7px;top:782.9px;font-size:20px;color:#2ba673;transform:scaleX(1.098);transform-origin:0 0;">Grundlagenkurs (Berlin)</div>
<div class="a" style="left:1300.0px;top:849.1px;width:400.0px;height:49.5px;border:1.6px solid #2ba673;border-radius:6px;"></div>
<div class="t" style="left:1410px;top:863.3px;font-size:20px;color:#2ba673;transform:scaleX(1.11);transform-origin:0 0;">Fortgeschrittenenkurse</div>
<div class="a" style="left:1300.0px;top:930.3px;width:400.0px;height:49.5px;border:1.6px solid #2ba673;border-radius:6px;"></div>
<div class="t" style="left:1410px;top:944.5px;font-size:20px;color:#2ba673;transform:scaleX(1.11);transform-origin:0 0;">Fortgeschrittenenkurse</div>
<div class="a" style="left:1300.0px;top:1011.0px;width:400.0px;height:49.5px;border:1.6px solid #2ba673;border-radius:6px;"></div>
<div class="t" style="left:1410px;top:1025.2px;font-size:20px;color:#2ba673;transform:scaleX(1.11);transform-origin:0 0;">Fortgeschrittenenkurse</div>
<div class="a" style="left:1300.0px;top:1091.8px;width:400.0px;height:49.5px;border:1.6px solid #2ba673;border-radius:6px;"></div>
<div class="t" style="left:1410px;top:1106px;font-size:20px;color:#2ba673;transform:scaleX(1.11);transform-origin:0 0;">Fortgeschrittenenkurse</div>
</div>
<div class="a" style="left:1623.0px;top:79.0px;width:40.0px;height:1490.0px;background:#efefef;"></div>
<div class="a" style="left:1622.5px;top:79.0px;width:1.5px;height:1490.0px;background:#dadada;"></div>
<svg class="a" style="left:1636.0px;top:770.0px;" width="13.5" height="21.0" viewBox="0 0 13.5 21"><polyline points="2,2 11.3,10.5 2,19" fill="none" stroke="#1b1d20" stroke-width="3.6" stroke-linecap="round" stroke-linejoin="round"/></svg>
<div class="a" style="left:742.3px;top:1479.3px;width:880.7px;height:8.0px;background:#cfcfcf;border-radius:4px;"></div>
<svg class="a" style="left:786.7px;top:1524.7px;" width="14.7" height="13.7" viewBox="0 0 14.7 13.7"><path d="M1.3 0.5V13.2" stroke="#c4c4c4" stroke-width="2.3"/><polyline points="12.8,1.2 6,6.85 12.8,12.5" fill="none" stroke="#c4c4c4" stroke-width="2.3" stroke-linejoin="round"/></svg>
<svg class="a" style="left:855.0px;top:1524.7px;" width="9.5" height="13.7" viewBox="0 0 9.5 13.7"><polyline points="8,1.2 1.8,6.85 8,12.5" fill="none" stroke="#c4c4c4" stroke-width="2.3" stroke-linejoin="round"/></svg>
<div class="a" style="left:901px;top:1509px;width:43px;height:43px;border-radius:50%;background:#4379f0;"></div>
<svg class="a" style="left:917.0px;top:1521.5px;" width="8.0" height="17.2" viewBox="0 0 8 17.2"><path d="M0.3 0.2H6.6V17.2H3.8V2.9H0.3z" fill="#ffffff"/></svg>
<div class="t" style="left:966.0px;top:1518.7px;font-size:24px;color:#30353a;">2</div>
<div class="t" style="left:1015.6px;top:1518.7px;font-size:24px;color:#30353a;">3</div>
<div class="t" style="left:1064.5px;top:1518.7px;font-size:24px;color:#30353a;">4</div>
<div class="t" style="left:1114.5px;top:1518.7px;font-size:24px;color:#30353a;">5</div>
<div class="a" style="left:1166.5px;top:1535.0px;width:3.4px;height:3.6px;background:#30353a;border-radius:50%;"></div>
<div class="a" style="left:1171.5px;top:1535.0px;width:3.4px;height:3.6px;background:#30353a;border-radius:50%;"></div>
<div class="a" style="left:1176.5px;top:1535.0px;width:3.4px;height:3.6px;background:#30353a;border-radius:50%;"></div>
<svg class="a" style="left:1231.0px;top:1525.0px;" width="9.5" height="14.0" viewBox="0 0 9.5 14"><polyline points="1.5,1.2 7.8,7 1.5,12.8" fill="none" stroke="#1b1d20" stroke-width="2.4" stroke-linejoin="round"/></svg>
<svg class="a" style="left:1292.7px;top:1525.0px;" width="15.0" height="14.0" viewBox="0 0 15 14"><polyline points="1.5,1.2 7.8,7 1.5,12.8" fill="none" stroke="#1b1d20" stroke-width="2.4" stroke-linejoin="round"/><path d="M13.6 0.5V13.5" stroke="#1b1d20" stroke-width="2.4"/></svg>
<div class="t" style="left:1373.0px;top:1522.8px;font-size:23px;color:#5c626a;transform:scaleX(0.7638);transform-origin:0.00px 0;">10</div>
<svg class="a" style="left:1496.6px;top:1528.8px;" width="18.4" height="9.6" viewBox="0 0 18.4 9.6"><polygon points="0,0 18.4,0 9.2,9.6" fill="#858585"/></svg>
<div class="a" style="left:1372.3px;top:1560.2px;width:148.3px;height:1.6px;background:#9a9a9a;"></div>
<div class="t" style="left:1547.4px;top:1519.8px;font-size:22px;color:#3c4247;letter-spacing:0.20px;transform:scaleX(1.0800);transform-origin:0.00px 0;">Einträge</div>
<div class="a" style="left:1623.0px;top:1490.0px;width:40.0px;height:79.0px;background:#efefef;"></div>
<div class="a" style="left:1622.5px;top:1490.0px;width:1.5px;height:79.0px;background:#dadada;"></div>
<svg class="a" style="left:1736.5px;top:194.9px;" width="27.0" height="22.4" viewBox="0 0 27 22.4"><g fill="none" stroke-linecap="round" stroke-linejoin="round" stroke-width="3.6">
<g stroke="#e7b136"><path d="M2 5.5H24"/><polyline points="20.5,2 24.5,5.5 20.5,9"/></g>
<g stroke="#efd391"><path d="M25 16.9H3"/><polyline points="6.5,13.4 2.5,16.9 6.5,20.4"/></g></g></svg>
<div class="t" style="left:1790.6px;top:190.0px;font-size:31px;color:#1f2326;letter-spacing:0.15px;transform:scaleX(1.0800);transform-origin:0.00px 0;-webkit-text-stroke:0.15px #1f2326;">Transaktion: #220193</div>
<div class="a" style="left:2337.0px;top:165.0px;width:59.8px;height:58.8px;background:#f2f2f2;border-radius:10px;"></div>
<svg class="a" style="left:2360.0px;top:188.0px;" width="14.3" height="13.7" viewBox="0 0 14.3 13.7"><path d="M1.5 1.5L12.8 12.2M12.8 1.5L1.5 12.2" stroke="#1b1d20" stroke-width="3.2" stroke-linecap="round"/></svg>
<div class="a" style="left:1736.8px;top:250.5px;width:660.0px;height:1.5px;background:#dcdcdc;"></div>
<div class="a" style="left:1735.9px;top:277.7px;width:237.1px;height:55.3px;background:#ffffff;border:1.8px solid #3a3d42;border-radius:10px;"></div>
<svg class="a" style="left:1756.8px;top:296.5px;" width="23.2" height="17.4" viewBox="0 0 23.2 17.4"><path d="M0.5 8.7L11 0.8V16.6z M11.5 8.7L22 0.8V16.6z" fill="#1b1d20" stroke="#1b1d20" stroke-width="1" stroke-linejoin="round"/></svg>
<div class="t" style="left:1793.6px;top:292.9px;font-size:25px;color:#212529;transform:scaleX(1.0256);transform-origin:0.00px 0;">Rückerstatten</div>
<div class="a" style="left:1737.4px;top:357.8px;width:659.4px;height:502.9px;border:1.4px solid #dcdcdc;background:#ffffff;"></div>
<div class="a" style="left:1737.4px;top:430.3px;width:659.4px;height:1.4px;background:#dcdcdc;"></div>
<div class="a" style="left:1737.4px;top:491.6px;width:659.4px;height:1.4px;background:#dcdcdc;"></div>
<div class="a" style="left:1737.4px;top:552.7px;width:659.4px;height:1.4px;background:#dcdcdc;"></div>
<div class="a" style="left:1737.4px;top:614.5px;width:659.4px;height:1.4px;background:#dcdcdc;"></div>
<div class="a" style="left:1737.4px;top:676.6px;width:659.4px;height:1.4px;background:#dcdcdc;"></div>
<div class="a" style="left:1737.4px;top:737.5px;width:659.4px;height:1.4px;background:#dcdcdc;"></div>
<div class="a" style="left:1737.4px;top:798.8px;width:659.4px;height:1.4px;background:#dcdcdc;"></div>
<div class="t" style="left:1774.0px;top:383.2px;font-size:21px;color:#6b6b6b;transform:scaleX(1.0781);transform-origin:0.00px 0;">Eigenschaft</div>
<div class="t" style="left:2102.2px;top:383.2px;font-size:21px;color:#6b6b6b;transform:scaleX(1.0751);transform-origin:0.00px 0;">Wert</div>
<div class="t" style="left:1773.4px;top:450.0px;font-size:22px;color:#2b2f33;transform:scaleX(1.0573);transform-origin:0.00px 0;">Datum</div>
<div class="t" style="left:2101.8px;top:450.0px;font-size:22px;color:#3a3e42;transform:scaleX(0.8583);transform-origin:0.00px 0;">31.10.2022 16:28</div>
<div class="t" style="left:1773.4px;top:512.0px;font-size:22px;color:#2b2f33;transform:scaleX(1.0383);transform-origin:0.00px 0;">Nummer</div>
<div class="t" style="left:1773.4px;top:573.6px;font-size:22px;color:#2b2f33;transform:scaleX(1.0279);transform-origin:0.00px 0;">Betrag</div>
<div class="t" style="left:2101.8px;top:573.6px;font-size:22px;color:#3a3e42;transform:scaleX(0.8095);transform-origin:0.00px 0;">EUR 1.00</div>
<div class="t" style="left:1773.4px;top:635.0px;font-size:22px;color:#2b2f33;">Kunde</div>
<div class="t" style="left:2101.8px;top:635.0px;font-size:22px;color:#3a3e42;transform:scaleX(1.0068);transform-origin:0.00px 0;">Vanja Mikkels</div>
<div class="t" style="left:1773.4px;top:696.8px;font-size:22px;color:#2b2f33;transform:scaleX(1.0197);transform-origin:0.00px 0;">Status</div>
<div class="t" style="left:1773.4px;top:757.4px;font-size:22px;color:#2b2f33;transform:scaleX(1.0023);transform-origin:0.00px 0;">Typ</div>
<div class="t" style="left:1773.4px;top:819.0px;font-size:22px;color:#2b2f33;transform:scaleX(1.0258);transform-origin:0.00px 0;">Beschreibung</div>
<svg class="a" style="left:2101.5px;top:694.4px;" width="26.0" height="26.0" viewBox="0 0 26 26"><circle cx="13" cy="13" r="13" fill="#a6dcc4"/><polyline points="7.2,13.2 11.3,17.2 19,9.2" fill="none" stroke="#1f9d63" stroke-width="3.4" stroke-linecap="round" stroke-linejoin="round"/></svg>
<div class="t" style="left:2141.4px;top:696.8px;font-size:22px;color:#2b2f33;">Aktiv</div>
<svg class="a" style="left:2101.0px;top:756.8px;" width="30.0" height="23.2" viewBox="0 0 30 23.2"><rect width="30" height="23.2" rx="2" fill="#1d3f8f"/><text x="15" y="14.8" font-family="Liberation Sans" font-size="8.2" font-style="italic" font-weight="bold" fill="#fff" text-anchor="middle">PayPal</text></svg>
<div class="t" style="left:2144.4px;top:757.4px;font-size:22px;color:#2b2f33;transform:scaleX(0.9550);transform-origin:0.00px 0;">PayPal</div>
<div class="a" style="left:0.0px;top:0.0px;width:2463.0px;height:1569.0px;background:rgba(0,0,0,0.4);"></div>
<div class="a" style="left:953px;top:304px;width:557px;height:953px;background:#fff;border-radius:12px;box-shadow:0 6px 30px rgba(0,0,0,0.12);"></div>
<div class="a" style="left:953.0px;top:304.0px;width:557.0px;height:63.8px;background:#f1f1f1;border-radius:12px;"></div>
<div class="a" style="left:1463.3px;top:293px;width:59.7px;height:59.8px;background:#fff;border-radius:10px;box-shadow:0 4px 28px rgba(0,0,0,0.16);"></div>
<svg class="a" style="left:1484.0px;top:315.0px;" width="18.4" height="17.8" viewBox="0 0 18.4 17.8"><path d="M1 1L17.4 16.8M17.4 1L1 16.8" stroke="#505050" stroke-width="2"/></svg>
<div class="t" style="left:974.9px;top:320.3px;font-size:32px;color:#24282c;letter-spacing:0.96px;transform:scaleX(1.0800);transform-origin:0.00px 0;-webkit-text-stroke:0.3px #24282c;">Rückerstattung</div>
<svg class="a" style="left:979.9px;top:405.1px;" width="39.1" height="30.6" viewBox="0 0 39.1 30.6"><rect width="39.1" height="30.6" rx="3" fill="#003087"/><text x="19.5" y="19.3" font-family="Liberation Sans" font-size="10.6" font-style="italic" font-weight="bold" fill="#fff" text-anchor="middle">PayPal</text></svg>
<div class="t" style="left:1034.2px;top:410.0px;font-size:32px;color:#24282c;">PayPal</div>
<div class="t" style="left:1392.2px;top:425.2px;font-size:21px;color:#b8c2d0;transform:scaleX(1.0294);transform-origin:81.80px 0;-webkit-text-stroke:0.4px #b8c2d0;">#220193</div>
<div class="a" style="left:980.0px;top:474.8px;width:495.0px;height:1.8px;background:#e9e9e9;"></div>
<div class="a" style="left:980.0px;top:760.0px;width:495.0px;height:1.8px;background:#e9e9e9;"></div>
<div class="a" style="left:980.0px;top:874.0px;width:495.0px;height:1.8px;background:#e9e9e9;"></div>
<div class="a" style="left:980.0px;top:1123.0px;width:495.0px;height:1.8px;background:#e9e9e9;"></div>
<div class="t" style="left:980.2px;top:513.5px;font-size:22px;color:#9b9b9b;transform:scaleX(1.0202);transform-origin:0.00px 0;">Betrag</div>
<div class="t" style="left:1384.3px;top:513.5px;font-size:22px;color:#2a2e32;transform:scaleX(0.8285);transform-origin:89.32px 0;-webkit-text-stroke:0.3px #2a2e32;">EUR 100</div>
<div class="t" style="left:980.2px;top:556.5px;font-size:22px;color:#9b9b9b;transform:scaleX(1.0364);transform-origin:0.00px 0;">Rückerstattet</div>
<div class="t" style="left:1408.8px;top:556.5px;font-size:22px;color:#2a2e32;transform:scaleX(0.8273);transform-origin:64.79px 0;-webkit-text-stroke:0.3px #2a2e32;">EUR 0</div>
<div class="t" style="left:980.2px;top:598.3px;font-size:22px;color:#9b9b9b;transform:scaleX(1.0273);transform-origin:0.00px 0;">Transaktion</div>
<div class="t" style="left:1400.2px;top:598.3px;font-size:22px;color:#2a2e32;transform:scaleX(0.9077);transform-origin:73.37px 0;-webkit-text-stroke:0.3px #2a2e32;">220193</div>
<div class="t" style="left:980.2px;top:640.6px;font-size:22px;color:#9b9b9b;">Token</div>
<div class="t" style="left:1298.6px;top:640.6px;font-size:22px;color:#2a2e32;transform:scaleX(0.9292);transform-origin:168.74px 0;">6CA36444MH8...</div>
<div class="t" style="left:980.2px;top:692.5px;font-size:22px;color:#9b9b9b;">Kunde</div>
<div class="a" style="left:1271.3px;top:681.3px;width:203.4px;height:45.3px;border:1.8px solid #3b82f6;border-radius:8px;background:#fff;"></div>
<svg class="a" style="left:1292.0px;top:693.0px;" width="15.3" height="17.5" viewBox="0 0 15.3 17.5"><circle cx="7.65" cy="4.2" r="4.1" fill="#a9c8fb"/><path d="M0 17.5v-3.6a4.6 4.6 0 0 1 4.6-4.6h6.1a4.6 4.6 0 0 1 4.6 4.6v3.6z" fill="#3b82f6"/></svg>
<div class="t" style="left:1321.0px;top:692.5px;font-size:22px;color:#3b82f6;transform:scaleX(0.9822);transform-origin:0.00px 0;">Vanja Mikkels</div>
<div class="t" style="left:980.0px;top:791.7px;font-size:22px;color:#2a2e32;transform:scaleX(1.0278);transform-origin:0.00px 0;">Sie können einen maximalen Betrag von</div>
<div class="t" style="left:1378.7px;top:791.7px;font-size:22px;color:#1f2327;transform:scaleX(0.8397);transform-origin:89.32px 0;font-weight:bold;">EUR 100</div>
<div class="t" style="left:980.0px;top:821.7px;font-size:22px;color:#2a2e32;transform:scaleX(1.0311);transform-origin:0.00px 0;">an Vanja Mikkels rückerstatten.</div>
<div class="a" style="left:980.0px;top:902.0px;width:495.0px;height:158.3px;background:#f4f4f4;border-radius:7px;"></div>
<div class="t" style="left:993.3px;top:918.0px;font-size:22px;color:#a6a6a6;transform:scaleX(0.9747);transform-origin:0.00px 0;">Fügen Sie eine Beschreibung hinzu.</div>
<div class="t" style="left:1411.5px;top:1073.5px;font-size:18px;color:#9b9b9b;letter-spacing:0.14px;transform:scaleX(1.0800);transform-origin:55.93px 0;">0 / 250</div>
<div class="t" style="left:1007.4px;top:1172.0px;font-size:22px;color:#4a5058;">0.00</div>
<svg class="a" style="left:1114.0px;top:1177.2px;" width="19.0" height="9.3" viewBox="0 0 19 9.3"><polygon points="0,0 19,0 9.5,9.3" fill="#7a7a7a"/></svg>
<svg class="a" style="left:1150.5px;top:1177.7px;" width="18.5" height="9.3" viewBox="0 0 18.5 9.3"><polygon points="0,9.3 18.5,9.3 9.25,0" fill="#7a7a7a"/></svg>
<div class="a" style="left:980.0px;top:1214.0px;width:221.0px;height:1.8px;background:#949494;"></div>
<div class="a" style="left:1271.0px;top:1151.2px;width:203.9px;height:70.7px;background:#7f98c5;border-radius:8px;"></div>
<div class="t" style="left:1291.2px;top:1174.8px;font-size:25px;color:#ffffff;transform:scaleX(1.0580);transform-origin:0.00px 0;-webkit-text-stroke:0.35px #fff;">Rückerstatten</div>
</body></html>
